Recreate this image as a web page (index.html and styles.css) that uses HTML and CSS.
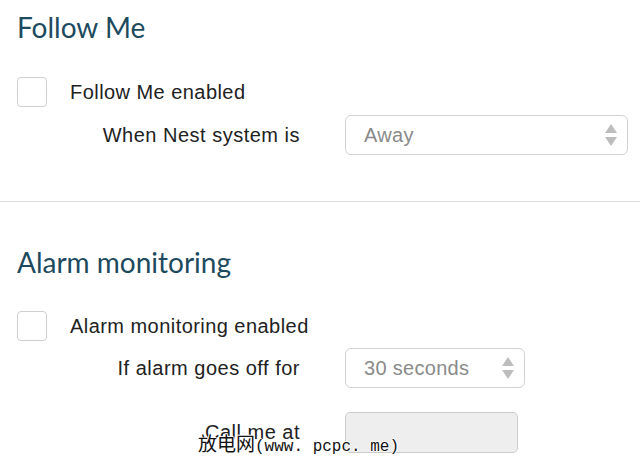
FILE: index.html
```html
<!DOCTYPE html>
<html>
<head>
<meta charset="utf-8">
<link rel="stylesheet" href="styles.css">
</head>
<body>
<div class="page">
  <section class="section first">
    <h1 class="title">Follow Me</h1>
    <div class="check-row">
      <span class="checkbox"></span>
      <span class="check-label">Follow Me enabled</span>
    </div>
    <div class="field">
      <span class="label">When Nest system is</span>
      <div class="select wide">
        <span class="select-value">Away</span>
        <svg class="arrows" width="14" height="24" viewBox="0 0 14 24"><path d="M7 1 L13 10 L1 10 Z" fill="#bdbdbd"/><path d="M1 14 L13 14 L7 23 Z" fill="#bdbdbd"/></svg>
      </div>
    </div>
  </section>
  <section class="section second">
    <h1 class="title">Alarm monitoring</h1>
    <div class="check-row">
      <span class="checkbox"></span>
      <span class="check-label">Alarm monitoring enabled</span>
    </div>
    <div class="field tight">
      <span class="label">If alarm goes off for</span>
      <div class="select narrow">
        <span class="select-value">30 seconds</span>
        <svg class="arrows" width="14" height="24" viewBox="0 0 14 24"><path d="M7 1 L13 10 L1 10 Z" fill="#bdbdbd"/><path d="M1 14 L13 14 L7 23 Z" fill="#bdbdbd"/></svg>
      </div>
    </div>
    <div class="field phone">
      <span class="label">Call me at</span>
      <div class="input"></div>
    </div>
  </section>
  <div class="watermark"><span class="wm-cjk">放电网</span><span class="wm-latin">(www. pcpc. me)</span></div>
</div>
</body>
</html>
```
FILE: styles.css
```css
html, body {
  margin: 0;
  padding: 0;
  background: #ffffff;
}
.page {
  position: relative;
  width: 640px;
  height: 468px;
  overflow: hidden;
  font-family: "Liberation Sans", Arial, sans-serif;
  color: #222222;
}
.section {
  padding-left: 17px;
}
.first {
  padding-top: 10px;
  padding-bottom: 46px;
  border-bottom: 1px solid #dcdcdc;
}
.second {
  padding-top: 43px;
}
.title {
  margin: 0;
  font-family: "Lato", sans-serif;
  font-weight: 400;
  font-size: 28px;
  line-height: 34px;
  color: #1d4a5e;
}
.check-row {
  display: flex;
  align-items: center;
  height: 30px;
  margin-top: 33px;
}
.second .check-row {
  margin-top: 32px;
}
.checkbox {
  width: 28px;
  height: 28px;
  border: 1px solid #cfcfcf;
  border-radius: 4px;
  box-sizing: content-box;
}
.check-label {
  margin-left: 23px;
  font-size: 20px;
  letter-spacing: 0.45px;
}
.field {
  display: flex;
  align-items: center;
  margin-top: 8px;
}
.field.tight {
  margin-top: 7px;
}
.field.phone {
  margin-top: 24px;
}
.label {
  width: 283px;
  margin-right: 45px;
  text-align: right;
  font-size: 20px;
  letter-spacing: 0.5px;
}
.select {
  position: relative;
  display: flex;
  align-items: center;
  height: 40px;
  border: 1px solid #d2d2d2;
  border-radius: 6px;
  box-sizing: border-box;
  padding-left: 18px;
  color: #8a8a8a;
  font-size: 20px;
  letter-spacing: 0.3px;
}
.select.wide {
  width: 283px;
}
.select.narrow {
  width: 180px;
}
.select-value {
  flex: 1;
}
.arrows {
  margin-right: 9px;
}
.input {
  width: 173px;
  height: 41px;
  box-sizing: border-box;
  border: 1px solid #cccccc;
  border-radius: 5px;
  background: #eeeeee;
}
.watermark {
  position: absolute;
  left: 198px;
  top: 431px;
  color: #111111;
  text-shadow: -1px 0 #fff, 1px 0 #fff, 0 -1px #fff, 0 1px #fff;
  white-space: nowrap;
  line-height: 24px;
}
.wm-cjk {
  font-family: "Noto Sans CJK SC", sans-serif;
  font-size: 19px;
}
.wm-latin {
  font-family: "Liberation Mono", monospace;
  font-size: 16px;
}
```
